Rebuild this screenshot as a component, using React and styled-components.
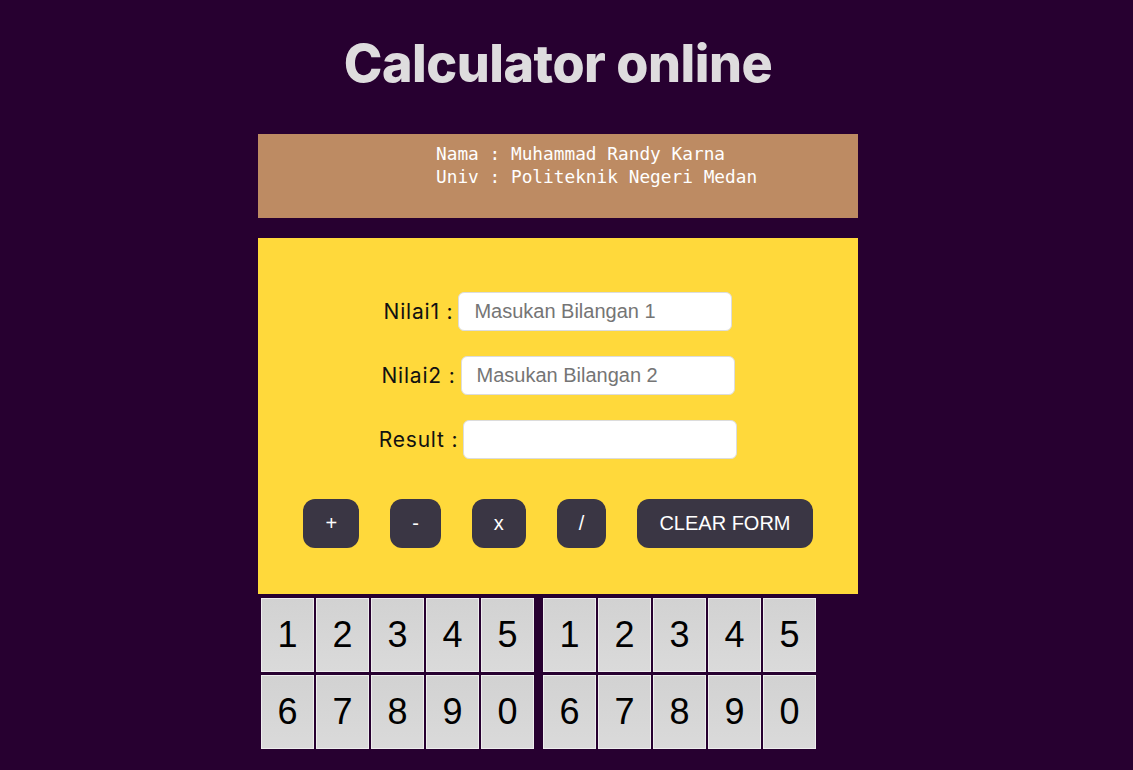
import React from "react";
import styled, { createGlobalStyle } from "styled-components";

const Global = createGlobalStyle`
  html, body { margin: 0; padding: 0; background: #270030; }
  body { font-family: "Liberation Sans", Arial, sans-serif; }
`;

const Page = styled.div`
  padding: 34px 17px 20px 0;
  display: flex;
  flex-direction: column;
  align-items: center;
  min-height: 770px;
  box-sizing: border-box;
`;

const Title = styled.h1`
  margin: 0;
  font-family: "Inter", sans-serif;
  font-weight: 800;
  font-size: 52px;
  line-height: 60px;
  color: #dedcde;
  letter-spacing: -0.5px;
`;

const Main = styled.div`
  width: 600px;
  margin-top: 40px;
  display: flex;
  flex-direction: column;
`;

const Info = styled.pre`
  margin: 0;
  height: 84px;
  box-sizing: border-box;
  background: #bd8b63;
  color: #ffffff;
  font-family: "DejaVu Sans Mono", monospace;
  font-size: 17.8px;
  line-height: 23px;
  padding: 8px 0 0 178px;
`;

const Form = styled.div`
  margin-top: 20px;
  background: #ffd93b;
  padding: 54px 0 46px;
  display: flex;
  flex-direction: column;
  align-items: center;
`;

const Fields = styled.div`
  display: flex;
  flex-direction: column;
  align-items: center;
  gap: 25px;
`;

const Row = styled.div`
  display: flex;
  align-items: center;
  gap: 5px;
`;

const Label = styled.label`
  font-family: "Inter", sans-serif;
  font-size: 21px;
  letter-spacing: 0.8px;
  color: #111;
`;

const Input = styled.input`
  width: 274px;
  height: 39px;
  box-sizing: border-box;
  border: 1px solid #dcdcdc;
  border-radius: 6px;
  background: #fff;
  padding: 0 15px;
  font-family: "Liberation Sans", Arial, sans-serif;
  font-size: 20px;
  outline: none;
  &::placeholder { color: #757575; }
`;

const Buttons = styled.div`
  margin-top: 40px;
  display: flex;
  gap: 31px;
`;

const OpButton = styled.button`
  height: 49px;
  padding: 0 22px;
  border: none;
  border-radius: 12px;
  background: #3a3644;
  color: #fff;
  font-family: "Liberation Sans", Arial, sans-serif;
  font-size: 20px;
  cursor: pointer;
`;

const Pads = styled.div`
  margin: 4px 0 0 3px;
  display: flex;
  gap: 9px;
`;

const Pad = styled.div`
  display: grid;
  grid-template-columns: repeat(5, 53px);
  column-gap: 2px;
  row-gap: 3px;
`;

const Key = styled.button`
  width: 53px;
  height: 74px;
  box-sizing: border-box;
  border: 1px solid #eeeeee;
  background: linear-gradient(#d2d2d2, #dadada);
  color: #000;
  font-family: "Liberation Sans", Arial, sans-serif;
  font-size: 36px;
  padding: 0;
  cursor: pointer;
`;

const digits = ["1", "2", "3", "4", "5", "6", "7", "8", "9", "0"];

export default function App() {
  return (
    <>
      <Global />
      <Page>
        <Title>Calculator online</Title>
        <Main>
          <Info>{"Nama : Muhammad Randy Karna\nUniv : Politeknik Negeri Medan"}</Info>
          <Form>
            <Fields>
              <Row>
                <Label>Nilai1 :</Label>
                <Input placeholder="Masukan Bilangan 1" />
              </Row>
              <Row>
                <Label>Nilai2 :</Label>
                <Input placeholder="Masukan Bilangan 2" />
              </Row>
              <Row>
                <Label>Result :</Label>
                <Input />
              </Row>
            </Fields>
            <Buttons>
              <OpButton>+</OpButton>
              <OpButton>-</OpButton>
              <OpButton>x</OpButton>
              <OpButton>/</OpButton>
              <OpButton>CLEAR FORM</OpButton>
            </Buttons>
          </Form>
          <Pads>
            {[0, 1].map((p) => (
              <Pad key={p}>
                {digits.map((d) => (
                  <Key key={d}>{d}</Key>
                ))}
              </Pad>
            ))}
          </Pads>
        </Main>
      </Page>
    </>
  );
}
